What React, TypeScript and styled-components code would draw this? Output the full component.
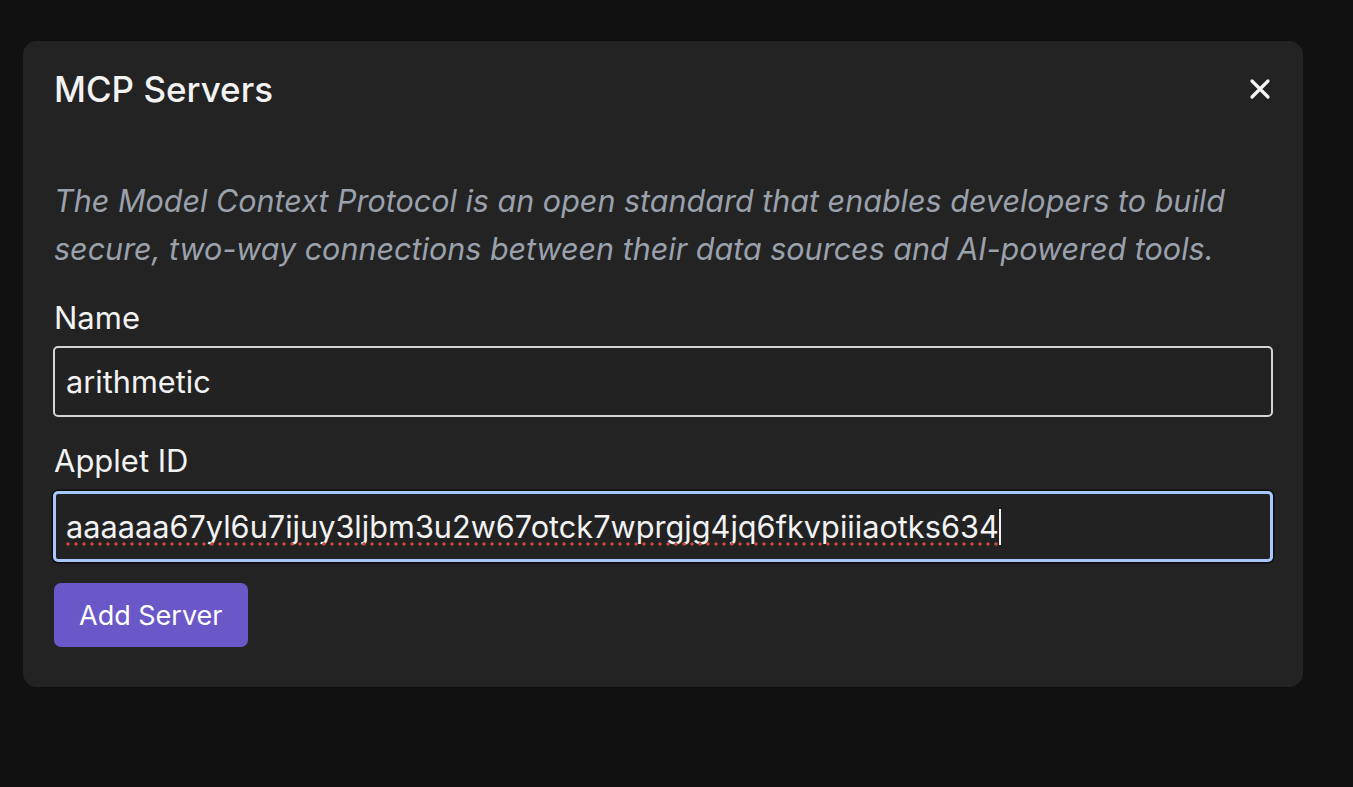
import React, { useEffect, useRef, useState } from "react";
import styled, { createGlobalStyle } from "styled-components";

const Global = createGlobalStyle`
  html, body { margin: 0; padding: 0; background: #111111; }
  body { font-family: Inter, "Noto Sans", sans-serif; color: #f2f2f2; }
  * { box-sizing: border-box; }
`;

const Page = styled.div`
  width: 1353px;
  height: 787px;
  padding: 41px 50px 0 23px;
  background: #111111;
`;

const Dialog = styled.section`
  width: 1280px;
  background: #232323;
  border-radius: 14px;
  padding: 27px 31px 40px 31px;
  display: flex;
  flex-direction: column;
`;

const Header = styled.header`
  display: flex;
  align-items: center;
  justify-content: space-between;
  height: 42px;
`;

const Title = styled.h2`
  margin: 0;
  font-size: 35px;
  line-height: 42px;
  font-weight: 500;
  color: #f2f2f2;
`;

const Close = styled.button`
  width: 30px;
  height: 30px;
  border: 0;
  background: transparent;
  padding: 0;
  margin-right: -3px;
  display: flex;
  align-items: center;
  justify-content: center;
  cursor: pointer;
`;

const Description = styled.p`
  margin: 67px 0 0 0;
  font-size: 30.5px;
  line-height: 48px;
  font-style: italic;
  color: #9ba1ac;
`;

const Field = styled.div`
  display: flex;
  flex-direction: column;
`;

const Label = styled.label<{ $top: number }>`
  margin-top: ${(p) => p.$top}px;
  font-size: 31px;
  line-height: 38px;
  color: #f2f2f2;
`;

const InputWrap = styled.div<{ $focused?: boolean }>`
  position: relative;
  margin-top: ${(p) => (p.$focused ? "11px" : "9px")};
  margin-left: -1px;
  width: 1220px;
`;

const Input = styled.input<{ $focused?: boolean }>`
  display: block;
  width: 1220px;
  height: 71px;
  background: #222222;
  color: #f2f2f2;
  caret-color: transparent;
  font-family: Inter, "Noto Sans", sans-serif;
  font-size: 30.7px;
  padding: 0 ${(p) => (p.$focused ? "10px" : "11px")};
  border-radius: 5px;
  outline: none;
  border: ${(p) => (p.$focused ? "3px solid #a6c8ff" : "2px solid #d4d4d4")};
  box-shadow: ${(p) => (p.$focused ? "0 0 0 1.5px #0d0d0d" : "none")};
`;

const Caret = styled.span`
  position: absolute;
  top: 18px;
  width: 2px;
  height: 36px;
  background: #f2f2f2;
  pointer-events: none;
`;

const SpellDots = styled.span`
  position: absolute;
  left: 13px;
  top: 51px;
  height: 4px;
  background-image: radial-gradient(circle at 2px 2px, #c9473c 1.4px, transparent 1.9px);
  background-size: 8px 4px;
  background-repeat: repeat-x;
  pointer-events: none;
`;

const Button = styled.button`
  margin-top: 21px;
  align-self: flex-start;
  height: 64px;
  padding: 0 25px;
  background: #6a57c8;
  color: #ffffff;
  border: 0;
  border-radius: 7px;
  font-family: Inter, "Noto Sans", sans-serif;
  font-size: 27px;
  cursor: pointer;
`;

const APPLET_ID = "aaaaaa67yl6u7ijuy3ljbm3u2w67otck7wprgjg4jq6fkvpiiiaotks634";

export default function App() {
  const idRef = useRef<HTMLInputElement>(null);
  const [textW, setTextW] = useState<number | null>(null);
  useEffect(() => {
    const el = idRef.current;
    if (!el) return;
    el.focus();
    el.setSelectionRange(APPLET_ID.length, APPLET_ID.length);
    const measure = () => {
      const ctx = document.createElement("canvas").getContext("2d");
      if (!ctx) return;
      ctx.font = getComputedStyle(el).font;
      setTextW(ctx.measureText(APPLET_ID).width);
    };
    if (document.fonts && document.fonts.ready) {
      document.fonts.ready.then(measure);
    } else {
      measure();
    }
  }, []);
  return (
    <>
      <Global />
      <Page>
        <Dialog>
          <Header>
            <Title>MCP Servers</Title>
            <Close aria-label="Close">
              <svg width="22" height="22" viewBox="0 0 22 22">
                <path d="M3 3 L19 19 M19 3 L3 19" stroke="#f5f5f5" strokeWidth="3.2" strokeLinecap="round" />
              </svg>
            </Close>
          </Header>
          <Description>
            The Model Context Protocol is an open standard that enables developers to build secure, two-way
            connections between their data sources and AI-powered tools.
          </Description>
          <Field>
            <Label $top={26}>Name</Label>
            <InputWrap>
              <Input defaultValue="arithmetic" spellCheck={false} />
            </InputWrap>
          </Field>
          <Field>
            <Label $top={25}>Applet ID</Label>
            <InputWrap $focused>
              <Input ref={idRef} $focused defaultValue={APPLET_ID} spellCheck={false} />
              {textW !== null && <SpellDots style={{ width: textW }} />}
              {textW !== null && <Caret style={{ left: 13 + textW }} />}
            </InputWrap>
          </Field>
          <Button>Add Server</Button>
        </Dialog>
      </Page>
    </>
  );
}
